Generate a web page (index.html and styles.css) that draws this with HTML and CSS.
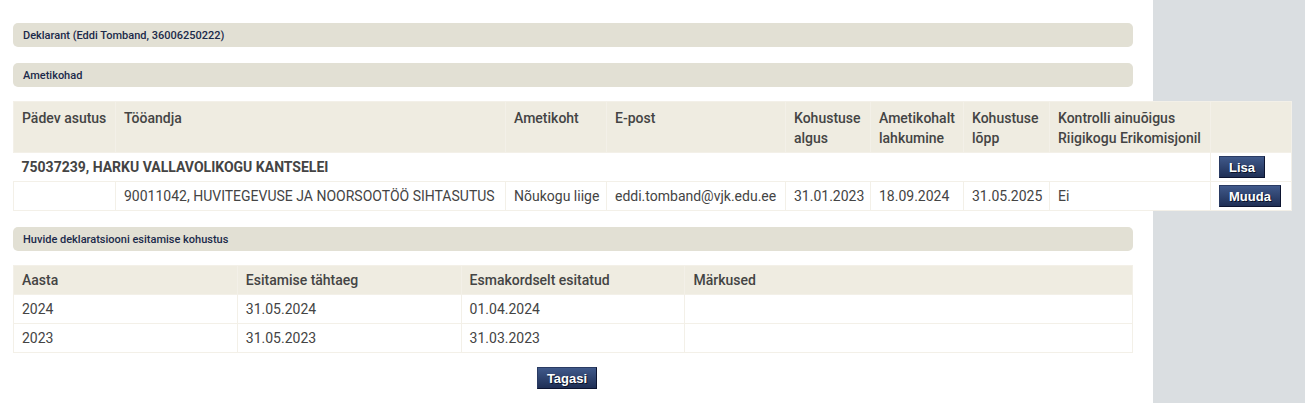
FILE: index.html
```html
<!DOCTYPE html>
<html lang="et">
<head>
    <meta charset="UTF-8">
    <title>Deklarant</title>
    <link rel="stylesheet" href="styles.css">
</head>
<body>
<div class="page">
    <div class="main">

        <!-- Deklarant -->
        <div class="section-title">Deklarant (Eddi Tomband, 36006250222)</div>

        <!-- Ametikohad -->
        <div class="section-title">Ametikohad</div>
        <table class="grid wide">
            <colgroup>
                <col style="width:102px"><col style="width:390px"><col style="width:101px">
                <col style="width:179px"><col style="width:85px"><col style="width:93px">
                <col style="width:86px"><col style="width:161px"><col style="width:81px">
            </colgroup>
            <thead>
                <tr>
                    <th>Pädev asutus</th>
                    <th>Tööandja</th>
                    <th>Ametikoht</th>
                    <th>E-post</th>
                    <th>Kohustuse algus</th>
                    <th>Ametikohalt lahkumine</th>
                    <th>Kohustuse lõpp</th>
                    <th>Kontrolli ainuõigus Riigikogu Erikomisjonil</th>
                    <th></th>
                </tr>
            </thead>
            <tbody>
                <tr class="org">
                    <td colspan="8"><b>75037239, HARKU VALLAVOLIKOGU KANTSELEI</b></td>
                    <td class="btn-cell"><button class="btn">Lisa</button></td>
                </tr>
                <tr>
                    <td></td>
                    <td>90011042, HUVITEGEVUSE JA NOORSOOTÖÖ SIHTASUTUS</td>
                    <td>Nõukogu liige</td>
                    <td>eddi.tomband@vjk.edu.ee</td>
                    <td>31.01.2023</td>
                    <td>18.09.2024</td>
                    <td>31.05.2025</td>
                    <td>Ei</td>
                    <td class="btn-cell"><button class="btn">Muuda</button></td>
                </tr>
            </tbody>
        </table>

        <!-- Esitamise kohustus -->
        <div class="section-title">Huvide deklaratsiooni esitamise kohustus</div>
        <table class="grid">
            <colgroup>
                <col style="width:20%"><col style="width:20%"><col style="width:20%"><col style="width:40%">
            </colgroup>
            <thead>
                <tr>
                    <th>Aasta</th>
                    <th>Esitamise tähtaeg</th>
                    <th>Esmakordselt esitatud</th>
                    <th>Märkused</th>
                </tr>
            </thead>
            <tbody>
                <tr><td>2024</td><td>31.05.2024</td><td>01.04.2024</td><td></td></tr>
                <tr><td>2023</td><td>31.05.2023</td><td>31.03.2023</td><td></td></tr>
            </tbody>
        </table>

        <div class="actions">
            <button class="btn">Tagasi</button>
        </div>
    </div>
    <div class="sidebar"></div>
</div>
</body>
</html>
```

FILE: styles.css
```css
body {
    margin: 0;
    font-family: Roboto, "Liberation Sans", sans-serif;
    color: #444;
    background-color: #fff;
}
.page {
    display: flex;
    min-height: 403px;
}
.main {
    flex: 0 0 1153px;
    min-width: 0;
    box-sizing: border-box;
    padding: 23px 20px 0 13px;
}
.sidebar {
    flex: 1;
    background-color: #dadee1;
}
.section-title {
    height: 24px;
    line-height: 25px;
    padding: 0 10px;
    margin-bottom: 16px;
    background-color: #e2e0d4;
    border-radius: 5px;
    font-size: 11px;
    font-weight: 500;
    color: #1b2a4a;
}
.section-title + .grid {
    margin-top: -2px;
}
.grid {
    width: 1120px;
    border-collapse: collapse;
    table-layout: fixed;
    font-size: 14px;
    margin: 0 0 16px;
}
.grid.wide {
    width: 1278px;
    position: relative; /* jookseb üle külgriba */
    background-color: #fff;
}
.grid th,
.grid td {
    border: 1px solid #f3f0e8;
    padding: 5px 4px 4px 8px;
    line-height: 19px;
    text-align: left;
    vertical-align: middle;
    white-space: nowrap;
}
.grid th {
    background-color: #efece1;
    font-weight: 500;
    color: #444;
    vertical-align: top;
}
.grid.wide th {
    white-space: normal;
    line-height: 20px;
    padding: 6px 2px 4px 8px;
    height: 39px;
}
.grid .org td {
    border-left: none;
    border-right: none;
}
.grid .org td:last-child {
    border-left: 1px solid #f3f0e8;
    border-right: 1px solid #f3f0e8;
}
.grid .btn-cell {
    padding-top: 3px;
    padding-bottom: 3px;
}
.btn-cell .btn {
    display: block;
}
.btn {
    height: 22px;
    padding: 0 9px;
    font-family: "Liberation Sans", Arial, sans-serif;
    font-size: 13px;
    font-weight: 700;
    color: #fff;
    text-shadow: 1px 1px 0 #0b1226;
    background: linear-gradient(#40598a, #1f2f55);
    border: 1px solid #2a3b63;
    border-right-color: #0c1430;
    border-bottom-color: #0c1430;
    cursor: pointer;
}
.btn:hover {
    background: linear-gradient(#4d68a0, #26396a);
}
.actions {
    text-align: center;
    padding-right: 12px;
    margin-top: -2px;
}
```
